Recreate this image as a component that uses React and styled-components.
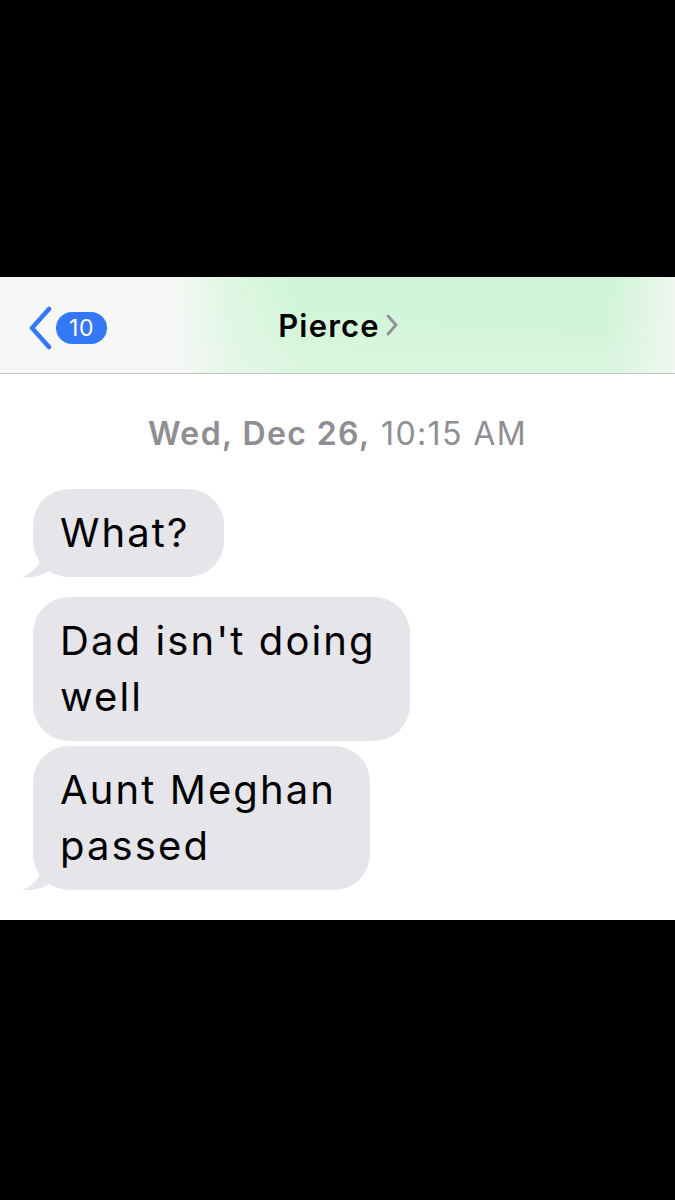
import React from 'react'
import styled, { createGlobalStyle } from 'styled-components'

const GlobalStyle = createGlobalStyle`
  html, body {
    margin: 0;
    padding: 0;
    background: #000;
  }
  body {
    font-family: Inter, "Liberation Sans", sans-serif;
  }
`

const messages = [
  { id: 1, text: 'What?', tail: true, gap: 0 },
  { id: 2, text: "Dad isn't doing\nwell", tail: false, gap: 20 },
  { id: 3, text: 'Aunt Meghan\npassed', tail: true, gap: 5 },
]

const App = () => {
  return (
    <Page>
      <GlobalStyle />
      <Letterbox $height={277} />
      <Screen>
        <NavBar>
          <BackButton>
            <svg width="26" height="44" viewBox="0 0 26 44">
              <path d="M22 3 L5 22 L22 41" fill="none" stroke="#3478f6" strokeWidth="4.5" strokeLinecap="round" strokeLinejoin="round" />
            </svg>
            <Badge>10</Badge>
          </BackButton>
          <Title>
            Pierce
            <svg width="14" height="24" viewBox="0 0 14 24">
              <path d="M3 3 L11 12 L3 21" fill="none" stroke="#939398" strokeWidth="3" strokeLinecap="round" strokeLinejoin="round" />
            </svg>
          </Title>
        </NavBar>
        <Thread>
          <Stamp><b>Wed, Dec 26,</b> 10:15 AM</Stamp>
          {messages.map((m) => (
            <Bubble key={m.id} $gap={m.gap}>
              {m.text}
              {m.tail && (
                <Tail width="30" height="28" viewBox="0 0 30 28">
                  <path d="M20 0 C20 12 14 22 0 27 C10 28 20 26 28 20 L28 0 Z" fill="#e5e5ea" />
                </Tail>
              )}
            </Bubble>
          ))}
        </Thread>
      </Screen>
      <Letterbox $height={279} />
    </Page>
  )
}

export default App

const Page = styled.div`
  width: 675px;
  display: flex;
  flex-direction: column;
`

const Letterbox = styled.div`
  height: ${(p) => p.$height}px;
  background: #000;
`

const Screen = styled.div`
  display: flex;
  flex-direction: column;
  background: #fff;
`

const NavBar = styled.div`
  position: relative;
  height: 96px;
  border-bottom: 1px solid #c4c4c6;
  display: flex;
  align-items: center;
  justify-content: center;
  background:
    linear-gradient(180deg, rgba(247,248,247,0) 0%, rgba(247,248,247,0.1) 50%, rgba(247,248,247,0.3) 100%),
    linear-gradient(90deg, #f7f7f7 0%, #f7f7f7 26%, #def7e2 34%, #d0f5d6 44%, #cef4d5 90%, #e0f6e3 96%, #eef6ef 100%);
`

const BackButton = styled.div`
  position: absolute;
  left: 27px;
  top: 29px;
  display: flex;
  align-items: center;
  gap: 3px;
`

const Badge = styled.span`
  height: 32px;
  min-width: 51px;
  box-sizing: border-box;
  border-radius: 16px;
  background: #3478f6;
  color: #fff;
  font-size: 23px;
  letter-spacing: 0.5px;
  display: flex;
  align-items: center;
  justify-content: center;
`

const Title = styled.div`
  display: flex;
  align-items: center;
  gap: 5px;
  margin-left: 2px;
  font-size: 31px;
  font-weight: 600;
  color: #000;
  letter-spacing: 1.2px;
`

const Thread = styled.div`
  height: 546px;
  padding-top: 40px;
  box-sizing: border-box;
  display: flex;
  flex-direction: column;
  align-items: flex-start;
`

const Stamp = styled.div`
  align-self: center;
  font-size: 32px;
  letter-spacing: 1.4px;
  color: #8e8e93;
  margin-bottom: 36px;
  b {
    font-weight: 600;
  }
`

const Bubble = styled.div`
  position: relative;
  margin-left: 33px;
  margin-top: ${(p) => p.$gap}px;
  padding: 16px 34px 16px 27px;
  border-radius: 36px;
  background: #e5e5ea;
  color: #000;
  font-size: 40px;
  letter-spacing: 2.1px;
  line-height: 56px;
  white-space: pre-line;
`

const Tail = styled.svg`
  position: absolute;
  left: -11px;
  bottom: -1px;
`
